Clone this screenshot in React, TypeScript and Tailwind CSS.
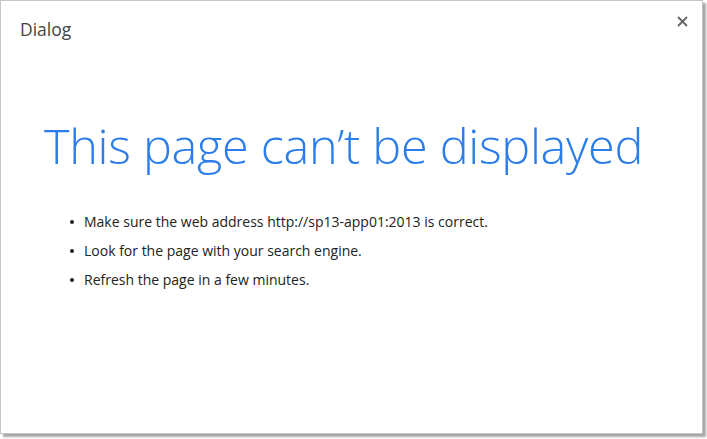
const tips = [
  "Make sure the web address http://sp13-app01:2013 is correct.",
  "Look for the page with your search engine.",
  "Refresh the page in a few minutes.",
];

export default function App() {
  return (
    <div className="h-[439px] w-[707px] bg-white">
      <div
        className="relative flex h-[434px] w-[703px] flex-col border border-[#c6c6c6] bg-white shadow-[3px_3px_2px_rgba(0,0,0,0.35)]"
        style={{ fontFamily: '"Open Sans", "Noto Sans", sans-serif' }}
      >
        <div className="flex h-[58px] items-start justify-between pl-[19px] pr-[12px] pt-[16px]">
          <h1 className="text-[17.5px] leading-[24px] font-normal text-[#444]">Dialog</h1>
          <button className="-mt-[4px] flex h-[16px] w-[16px] items-center justify-center text-[#666]">
            <svg width="11" height="11" viewBox="0 0 11 11">
              <path d="M1 1 L10 10 M10 1 L1 10" stroke="currentColor" strokeWidth="1.8" />
            </svg>
          </button>
        </div>
        <div className="pl-[43px] pt-[54px]">
          <h2 className="text-[48.6px] leading-[64px] font-light tracking-[-0.3px] text-[#2b7de9]">
            This page can’t be displayed
          </h2>
          <ul className="mt-[35px] flex flex-col gap-[9px] pl-[26px] text-[14px] leading-[20px] text-[#222]">
            {tips.map((t) => (
              <li key={t} className="flex items-center gap-[10px]">
                <span className="h-[4px] w-[4px] rounded-full bg-[#222]" />
                <span>{t}</span>
              </li>
            ))}
          </ul>
        </div>
      </div>
    </div>
  );
}
